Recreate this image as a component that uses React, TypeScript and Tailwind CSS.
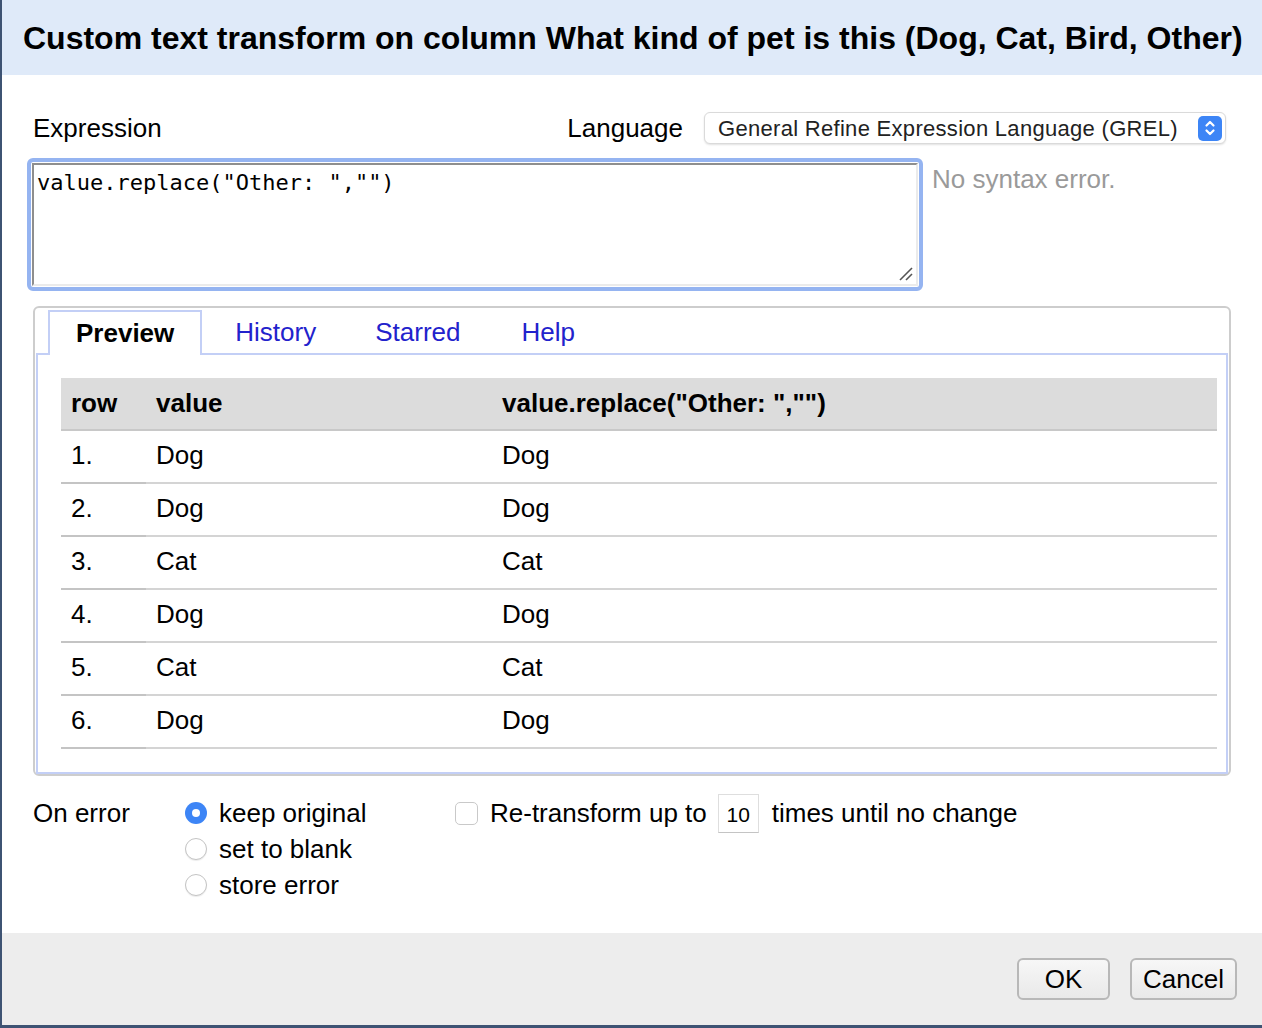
import React from "react";

const rows: [string, string, string][] = [
  ["1.", "Dog", "Dog"],
  ["2.", "Dog", "Dog"],
  ["3.", "Cat", "Cat"],
  ["4.", "Dog", "Dog"],
  ["5.", "Cat", "Cat"],
  ["6.", "Dog", "Dog"],
];

function Radio({ checked }: { checked?: boolean }) {
  if (checked) {
    return (
      <span className="flex h-[22px] w-[22px] items-center justify-center rounded-full bg-[#3d85f6]">
        <span className="h-[8px] w-[8px] rounded-full bg-white" />
      </span>
    );
  }
  return (
    <span className="h-[22px] w-[22px] rounded-full border border-[#c4c4c4] bg-white shadow-[0_1px_1px_rgba(0,0,0,0.08)]" />
  );
}

export default function App() {
  return (
    <div className="flex h-[1028px] w-[1262px] flex-col overflow-hidden border-b-[3px] border-l-2 border-[#3e5373] font-['Liberation_Sans',Arial,sans-serif] text-black">
      <div className="flex h-[75px] shrink-0 items-center bg-[#dfeaf9] pl-[21px]">
        <h1 className="whitespace-nowrap text-[32px] font-bold leading-none">
          Custom text transform on column What kind of pet is this (Dog, Cat, Bird, Other)
        </h1>
      </div>

      <div className="flex-1 bg-white pl-[31px] pr-[29px] pt-[37px]">
        <div className="flex h-[32px] items-center">
          <span className="text-[26px]">Expression</span>
          <span className="ml-auto text-[26px]">Language</span>
          <div className="ml-[21px] mr-[7px] flex h-[32px] w-[522px] items-center rounded-[6px] border border-[#dadada] bg-white pl-[13px] pr-[3px] shadow-[0_1px_2px_rgba(0,0,0,0.12)]">
            <span className="whitespace-nowrap text-[22px] tracking-[0.3px] text-[#222]">
              General Refine Expression Language (GREL)
            </span>
            <span className="ml-auto flex h-[25px] w-[24px] shrink-0 items-center justify-center rounded-[5px] bg-[#3d85f6]">
              <svg width="12" height="18" viewBox="0 0 12 18" fill="none" stroke="white" strokeWidth="2.2" strokeLinecap="round" strokeLinejoin="round">
                <path d="M2.5 6.5 L6 3 L9.5 6.5" />
                <path d="M2.5 11.5 L6 15 L9.5 11.5" />
              </svg>
            </span>
          </div>
        </div>

        <div className="mt-[14px] flex items-start">
          <div className="-ml-[6px] h-[133px] w-[896px] rounded-[6px] border-[4px] border-[#95b4f1] p-px">
            <div className="relative h-full w-full border-2 border-b-[#ebebeb] border-l-[#8e8e8e] border-r-[#ebebeb] border-t-[#8e8e8e] bg-white px-[3px] pt-[5px]">
              <span className="whitespace-pre font-['DejaVu_Sans_Mono',monospace] text-[22px] leading-[26px]">
                value.replace("Other: ","")
              </span>
              <svg className="absolute bottom-[3px] right-[3px]" width="14" height="14" viewBox="0 0 14 14" stroke="#555" strokeWidth="1.6">
                <path d="M1 13 L13 1" />
                <path d="M7 13 L13 7" />
              </svg>
            </div>
          </div>
          <span className="ml-[9px] mt-[5px] text-[26px] leading-[32px] text-[#9a9a9a]">No syntax error.</span>
        </div>

        <div className="mt-[15px] h-[470px] w-[1198px] rounded-[6px] border-2 border-[#cdcdcd] px-px pt-[2px]">
          <div className="flex h-[43px] items-end pl-[12px]">
            <div className="relative z-10 -mb-[2px] flex h-[45px] items-center border-2 border-b-0 border-[#c3cff6] bg-white px-[26px] pb-[2px]">
              <span className="text-[26px] font-bold leading-none">Preview</span>
            </div>
            <div className="flex h-[43px] items-center pl-[33px] text-[26px] leading-none text-[#2222cc]">
              <span>History</span>
              <span className="ml-[59px]">Starred</span>
              <span className="ml-[61px]">Help</span>
            </div>
          </div>
          <div className="h-[421px] border-2 border-[#c3cff6]">
            <div className="h-[407px] overflow-hidden pl-[23px] pr-[9px] pt-[23px]">
              <table className="w-full border-collapse text-left text-[26px]">
                <thead>
                  <tr className="h-[52px] bg-[#dcdcdc]">
                    <th className="w-[85px] border-b-2 border-[#c8c8c8] pl-[10px] font-bold">row</th>
                    <th className="w-[346px] border-b-2 border-[#c8c8c8] pl-[10px] font-bold">value</th>
                    <th className="border-b-2 border-[#c8c8c8] pl-[10px] font-bold">value.replace("Other: ","")</th>
                  </tr>
                </thead>
                <tbody>
                  {rows.map(([n, v, r]) => (
                    <tr key={n} className="h-[53px]">
                      <td className="border-b-2 border-[#c4c4c4] pl-[10px] pb-[2px]">{n}</td>
                      <td className="border-b-2 border-[#d4d4d4] pl-[10px] pb-[2px]">{v}</td>
                      <td className="border-b-2 border-[#d4d4d4] pl-[10px] pb-[2px]">{r}</td>
                    </tr>
                  ))}
                </tbody>
              </table>
            </div>
          </div>
        </div>

        <div className="mt-[24px] flex items-start text-[26px]">
          <span className="w-[152px] leading-[26px]">On error</span>
          <div className="flex w-[270px] flex-col gap-[10px]">
            <label className="flex h-[26px] items-center gap-[12px]">
              <Radio checked />
              <span>keep original</span>
            </label>
            <label className="flex h-[26px] items-center gap-[12px]">
              <Radio />
              <span>set to blank</span>
            </label>
            <label className="flex h-[26px] items-center gap-[12px]">
              <Radio />
              <span>store error</span>
            </label>
          </div>
          <div className="flex h-[26px] items-center">
            <span className="h-[23px] w-[23px] rounded-[5px] border border-[#c9c9c9] bg-white" />
            <span className="ml-[12px]">Re-transform up to</span>
            <span className="ml-[11px] flex h-[39px] w-[41px] items-center justify-center border border-[#dedede] border-b-[#c4c4c4] pt-[4px] text-[21px]">
              10
            </span>
            <span className="ml-[13px]">times until no change</span>
          </div>
        </div>
      </div>

      <div className="flex h-[92px] shrink-0 items-center justify-end gap-[20px] bg-[#ededed] pr-[25px]">
        <button className="h-[42px] w-[93px] rounded-[6px] border-2 border-[#b8b8b8] bg-gradient-to-b from-[#f7f7f7] to-[#e9e9e9] text-[26px]">
          OK
        </button>
        <button className="h-[42px] w-[107px] rounded-[6px] border-2 border-[#b8b8b8] bg-gradient-to-b from-[#f7f7f7] to-[#e9e9e9] text-[26px]">
          Cancel
        </button>
      </div>
    </div>
  );
}
